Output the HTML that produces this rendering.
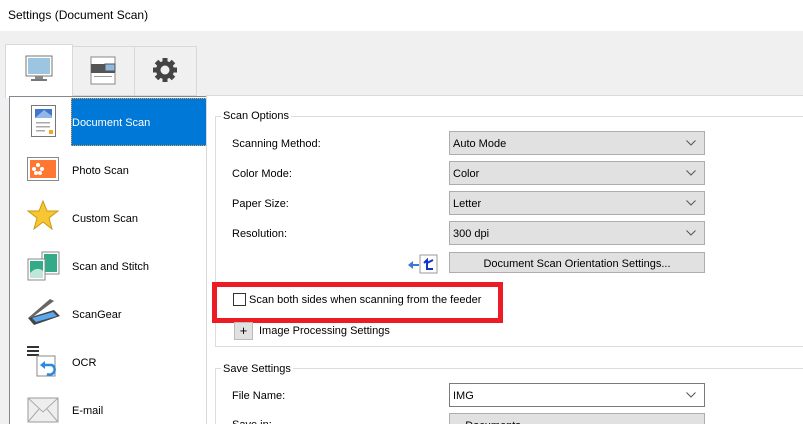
<!DOCTYPE html>
<html style="overflow:hidden;width:803px;height:424px"><head><style>
*{box-sizing:border-box;margin:0;padding:0}
body{width:803px;height:424px;overflow:hidden;background:#f0f0f0;font-family:"Liberation Sans",sans-serif;font-size:11px;color:#000;position:relative}
.a{position:absolute}
.combo{position:absolute;left:449px;width:256px;height:24px;background:#e1e1e1;border:1px solid #adadad;padding:6px 0 0 3px}
.combo svg{position:absolute;right:8px;top:8px}
.lbl{position:absolute;left:232px}
.item{position:absolute;left:72px}
</style></head><body>
<div class="a" style="left:0;top:0;width:803px;height:31px;background:#fff"></div>
<div class="a" style="left:8px;top:8px;font-size:12px">Settings (Document Scan)</div>
<div class="a" style="left:72px;top:46px;width:63px;height:50px;border:1px solid #d9d9d9;background:#f0f0f0"></div>
<div class="a" style="left:134px;top:46px;width:63px;height:50px;border:1px solid #d9d9d9;background:#f0f0f0"></div>
<div class="a" style="left:5px;top:44px;width:68px;height:54px;border:1px solid #d9d9d9;border-bottom:none;background:#fff"></div>
<svg class="a" style="left:25px;top:55px" width="28" height="28"><rect x="1" y="1" width="26" height="20" fill="#fff" stroke="#777"/><rect x="3" y="3" width="22" height="16" fill="#9cc5e0"/><rect x="10" y="21" width="8" height="3" fill="#888"/><rect x="6" y="24" width="16" height="2" fill="#777"/></svg>
<svg class="a" style="left:89px;top:56px" width="28" height="30"><rect x="2" y="1" width="24" height="27" fill="#fff" stroke="#888"/><rect x="2" y="8" width="24" height="9" fill="#555"/><rect x="16" y="8" width="10" height="7" fill="#8fb9e0" stroke="#555"/><rect x="5" y="20" width="18" height="1" fill="#999"/></svg>
<svg class="a" style="left:151px;top:56px" width="28" height="28" viewBox="0 0 28 28"><g fill="#444"><circle cx="14" cy="14" r="9"/><g stroke="#444" stroke-width="5"><line x1="14" y1="2" x2="14" y2="26"/><line x1="2" y1="14" x2="26" y2="14"/><line x1="5.5" y1="5.5" x2="22.5" y2="22.5"/><line x1="22.5" y1="5.5" x2="5.5" y2="22.5"/></g></g><circle cx="14" cy="14" r="4.5" fill="#f0f0f0"/></svg>
<div class="a" style="left:9px;top:96px;width:201px;height:328px;background:#fff;border:1px solid #828790;border-bottom:none"></div>
<div class="a" style="left:71px;top:98px;width:137px;height:48px;background:#0078d7;border:1px dotted #f0a040"></div>
<div class="item" style="top:117px;color:#fff">Document Scan</div>
<div class="item" style="top:165px">Photo Scan</div>
<div class="item" style="top:213px">Custom Scan</div>
<div class="item" style="top:261px">Scan and Stitch</div>
<div class="item" style="top:309px">ScanGear</div>
<div class="item" style="top:357px">OCR</div>
<div class="item" style="top:405px">E-mail</div>
<svg class="a" style="left:30px;top:104px" width="28" height="34"><rect x="1.5" y="1.5" width="24" height="31" fill="#fff" stroke="#777"/><path d="M5 14L14 6L22 12V5H5z" fill="#2b5fb8"/><rect x="5" y="5" width="17" height="9" fill="#4a86d6" opacity=".6"/><rect x="6" y="18" width="14" height="1.5" fill="#aaa"/><rect x="6" y="22" width="14" height="1.5" fill="#aaa"/><rect x="6" y="26" width="9" height="1.5" fill="#aaa"/><rect x="19" y="26" width="4" height="4" fill="#f5a623"/></svg>
<svg class="a" style="left:26px;top:156px" width="34" height="26"><rect x="1.5" y="1.5" width="31" height="23" fill="#fff" stroke="#888"/><rect x="4" y="4" width="26" height="18" fill="#ff7733"/><g fill="#fff"><circle cx="12" cy="9" r="2"/><circle cx="8" cy="13" r="2"/><circle cx="16" cy="13" r="2"/><circle cx="10" cy="17" r="2"/><circle cx="14" cy="17" r="2"/></g></svg>
<svg class="a" style="left:27px;top:200px" width="32" height="30"><path d="M16 1L20 11L31 11L22 18L25 29L16 22L7 29L10 18L1 11L12 11z" fill="#f7c632" stroke="#c99a10"/></svg>
<svg class="a" style="left:27px;top:251px" width="33" height="30"><rect x="15" y="1" width="17" height="22" fill="#fff" stroke="#888"/><rect x="17" y="3" width="13" height="18" fill="#33aa88"/><rect x="1" y="8" width="17" height="21" fill="#fff" stroke="#888"/><rect x="3" y="10" width="13" height="17" fill="#33aa88"/><path d="M3 22Q10 15 16 20V27H3z" fill="#bfe6d6"/></svg>
<svg class="a" style="left:26px;top:298px" width="36" height="30"><path d="M2 20L28 12L34 18L8 27z" fill="#444"/><path d="M6 20L27 14L31 18L10 24z" fill="#5aa8f0"/><path d="M2 20L24 1L28 3L8 18" fill="#666"/></svg>
<svg class="a" style="left:27px;top:346px" width="34" height="34"><rect x="0" y="0" width="12" height="2" fill="#333"/><rect x="0" y="4" width="12" height="2" fill="#333"/><rect x="0" y="8" width="12" height="2" fill="#333"/><rect x="10" y="10" width="18" height="20" fill="#fff" stroke="#888"/><path d="M15 19H25A5 5 0 0 1 20 28" fill="none" stroke="#2a8ae0" stroke-width="2.5"/><path d="M13 19L18 15V23z" fill="#2a8ae0"/></svg>
<svg class="a" style="left:27px;top:397px" width="32" height="27"><rect x="1" y="1" width="30" height="24" fill="#eee" stroke="#999"/><path d="M1 1L16 15L31 1M1 25L12 12M31 25L20 12" fill="none" stroke="#aaa"/></svg>
<div class="a" style="left:206px;top:95px;width:597px;height:329px;background:#fff;border:1px solid #d9d9d9;border-bottom:none;border-right:none"></div>
<div class="a" style="left:215px;top:116px;width:588px;height:231px;border:1px solid #dcdcdc;border-right:none"></div>
<div class="a" style="left:221px;top:110px;background:#fff;padding:0 2px">Scan Options</div>
<div class="lbl" style="top:138px">Scanning Method:</div>
<div class="lbl" style="top:168px">Color Mode:</div>
<div class="lbl" style="top:198px">Paper Size:</div>
<div class="lbl" style="top:228px">Resolution:</div>
<div class="combo" style="top:131px">Auto Mode<svg width="10" height="6"><path d="M0.5 0.5L5 5L9.5 0.5" fill="none" stroke="#555"/></svg></div>
<div class="combo" style="top:161px">Color<svg width="10" height="6"><path d="M0.5 0.5L5 5L9.5 0.5" fill="none" stroke="#555"/></svg></div>
<div class="combo" style="top:191px">Letter<svg width="10" height="6"><path d="M0.5 0.5L5 5L9.5 0.5" fill="none" stroke="#555"/></svg></div>
<div class="combo" style="top:221px">300 dpi<svg width="10" height="6"><path d="M0.5 0.5L5 5L9.5 0.5" fill="none" stroke="#555"/></svg></div>
<svg class="a" style="left:407px;top:254px" width="32" height="22"><rect x="13" y="1" width="17" height="18" fill="#fff" stroke="#999"/><path d="M17 9L20 6V15H26M20 9L26 6" fill="none" stroke="#1133cc" stroke-width="2"/><path d="M1 11L6 7V15z" fill="#3b7bd4"/><rect x="6" y="10" width="6" height="2" fill="#3b7bd4"/></svg>
<div class="a" style="left:449px;top:252px;width:256px;height:21px;background:#e1e1e1;border:1px solid #adadad;text-align:center;padding-top:5px">Document Scan Orientation Settings...</div>
<div class="a" style="left:212px;top:282px;width:291px;height:41px;border:5px solid #ed1c24"></div>
<div class="a" style="left:233px;top:293px;width:13px;height:13px;border:1px solid #333;background:#fff"></div>
<div class="a" style="left:249px;top:294px">Scan both sides when scanning from the feeder</div>
<div class="a" style="left:234px;top:322px;width:19px;height:18px;background:#e1e1e1;border:1px solid #bbb;text-align:center;line-height:16px;font-size:13px">+</div>
<div class="a" style="left:259px;top:325px">Image Processing Settings</div>
<div class="a" style="left:215px;top:368px;width:588px;height:56px;border:1px solid #dcdcdc;border-right:none;border-bottom:none"></div>
<div class="a" style="left:221px;top:363px;background:#fff;padding:0 2px">Save Settings</div>
<div class="lbl" style="top:390px">File Name:</div>
<div class="combo" style="top:383px;background:#fff;border-color:#7a7a7a">IMG<svg width="10" height="6"><path d="M0.5 0.5L5 5L9.5 0.5" fill="none" stroke="#555"/></svg></div>
<div class="lbl" style="top:419px">Save in:</div>
<div class="combo" style="top:413px;height:11px;border-bottom:none;overflow:hidden">&nbsp;&nbsp;&nbsp;&nbsp;Documents</div>
</body></html>
